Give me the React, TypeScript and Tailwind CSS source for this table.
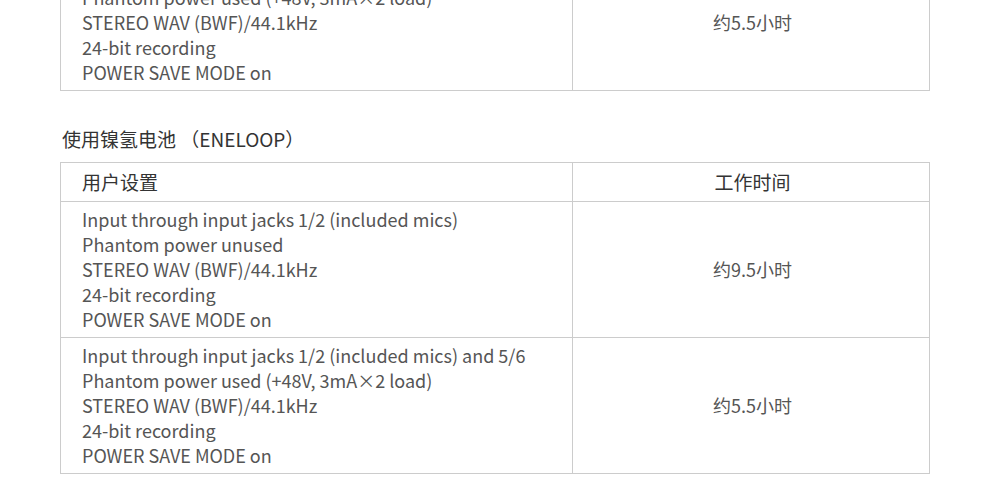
const setup = [
  'Input through input jacks 1/2 (included mics)',
  'Phantom power unused',
  'STEREO WAV (BWF)/44.1kHz',
  '24-bit recording',
  'POWER SAVE MODE on',
]

const setupPhantom = [
  'Input through input jacks 1/2 (included mics) and 5/6',
  'Phantom power used (+48V, 3mA×2 load)',
  'STEREO WAV (BWF)/44.1kHz',
  '24-bit recording',
  'POWER SAVE MODE on',
]

function Row({ lines, time }: { lines: string[]; time: string }) {
  return (
    <div className="grid grid-cols-[512px_1fr] border-t border-[#cccccc] first:border-t-0">
      <div className="border-r border-[#cccccc] pl-[21px] py-[5px] text-[18px] leading-[25px] text-[#555]">
        {lines.map(l => (
          <p key={l}>{l}</p>
        ))}
      </div>
      <div className="flex items-center justify-center pl-[3px] text-[18px] text-[#555]">{time}</div>
    </div>
  )
}

export default function App() {
  return (
    <div
      className="w-[990px] h-[488px] overflow-hidden bg-white"
      style={{ fontFamily: '"Noto Sans CJK SC", "Noto Sans", sans-serif' }}
    >
      <div className="ml-[60px] w-[870px] -mt-[46px]">
        <div className="border border-[#cccccc]">
          <Row lines={setupPhantom} time="约5.5小时" />
        </div>

        <h3 className="mt-[34px] mb-[10px] ml-[2px] text-[19px] leading-[27px] text-[#333]">
          使用镍氢电池 （ENELOOP）
        </h3>

        <div className="border border-[#cccccc]">
          <div className="grid grid-cols-[512px_1fr] h-[38px] text-[19px] text-[#333]">
            <div className="border-r border-[#cccccc] pl-[21px] flex items-center">用户设置</div>
            <div className="flex items-center justify-center pl-[3px]">工作时间</div>
          </div>
          <div className="border-t border-[#cccccc]">
            <Row lines={setup} time="约9.5小时" />
            <Row lines={setupPhantom} time="约5.5小时" />
          </div>
        </div>
      </div>
    </div>
  )
}
